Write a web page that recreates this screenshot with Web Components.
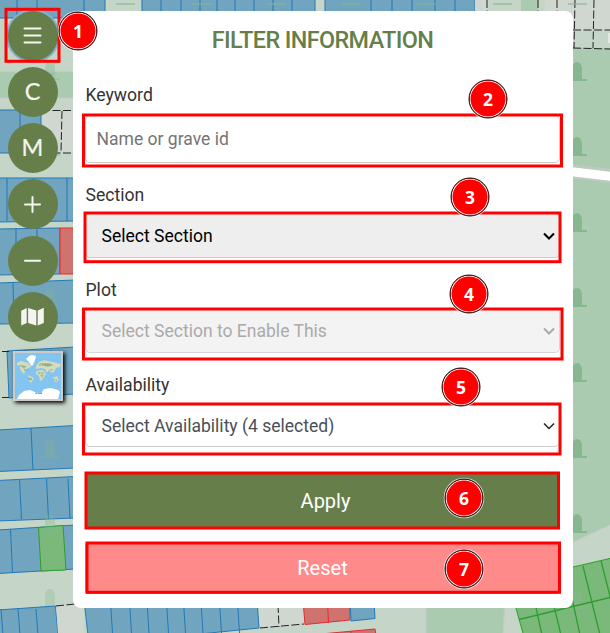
<!DOCTYPE html>
<html lang="en"><head><meta charset="utf-8"><title>Filter information</title>
<style>html,body{margin:0;width:610px;height:633px;overflow:hidden;font-family:Roboto,"Liberation Sans",sans-serif}</style></head>
<body><cemetery-app></cemetery-app>
<script>
const define=(name,html,after)=>customElements.define(name,class extends HTMLElement{
  constructor(){super();this.attachShadow({mode:'open'}).innerHTML=typeof html==='function'?'':html}
  connectedCallback(){if(typeof html==='function')this.shadowRoot.innerHTML=html(this);if(after)after(this)}
});
const poly=(pts,c)=>`<polygon class="${c}" points="${pts}"/>`;
const lines=(xs,y1,y2,dx=0,c='bl')=>xs.map(x=>`<path class="${c}" d="M${x} ${y1}L${x+dx} ${y2}"/>`).join('');
const tomb=(x,y)=>`<path class="tomb" d="M${x-5} ${y+17}V${y+6}Q${x-4} ${y} ${x} ${y}Q${x+4} ${y} ${x+5} ${y+6}V${y+17}H${x+10}V${y+19}H${x-10}V${y+17}Z"/>`;

define('cemetery-map',()=>`<style>:host{display:block}svg{display:block}
.b{fill:#71a4be;stroke:#2379b7}.bl{fill:none;stroke:#2379b7}.g{fill:#7bb97b;stroke:#2f9d2f}.gl{fill:none;stroke:#2f9d2f;stroke-width:1.3}
.r{fill:#d0736f;stroke:#e32c2f}.rl{stroke:#e32c2f}.p{fill:#aacbb0}.e{fill:#d0d6d0}.d{fill:none;stroke:#222;stroke-dasharray:8 2.5}.tomb{fill:#86b78f}</style>
<svg width="610" height="633" viewBox="0 0 610 633"><rect width="610" height="633" fill="#c5d5c8"/>
<path class="p" d="M0 72H73V98H0ZM521 0H538V11H521ZM560 48H610V525L560 548ZM426 600H505L503 633H426Z"/>
<path d="M0 71.5H73M0 98H73M573 542L610 525M426 600V633M505 600L503 633" fill="none" stroke="#c7c9c8"/>
${poly('-2,-2 105,-2 105,18 -2,18','b')}${lines([17,37,84],0,18)}
${poly('142,-2 315,-2 315,18 142,18','b')}${lines([161,181,200,217,235,254,273,292],0,18)}
${poly('325,-2 475,-2 475,18 325,18','b')}${lines([371,392,412,435,455],0,18)}
<path class="e" d="M475 0H487V15H475ZM545 0H610V30H545Z"/>
<path class="d" d="M487 0V15M538 0V12M557 0V12M575 0L574 48M594 0L593 48M573 30H610M573 48L610 49"/>
<rect x="608" y="33" width="4" height="10" fill="#e3e8e2"/>
<g opacity=".55"><path d="M116 4H135M192 4H211M267 4H286M342 4H361M417 4H436M493 4H512M568 4H587" stroke="#86b78f" stroke-width="2"/></g>
<g opacity=".4">${tomb(50,61)}${tomb(50,137)}</g>
${poly('-2,110 41,110 41,153 -2,153','b')}${lines([20],110,153)}
<path class="e" d="M42 110H73V153H42Z"/><path class="d" d="M42 110.500H73M42 153H73M62 111L61 153"/>
${poly('-2,178 75,178 75,221 -2,222','b')}${lines([7,33,67],178,221)}
${poly('-2,229 60,228 60,274 -2,275','b')}${lines([16,37],228,274)}${poly('60,228 75,228 75,274 60,274','r')}
${poly('-2,283 75,280 75,323 -2,324','b')}${lines([13],283,324,1)}
${poly('7,351 75,347 75,394 9,398','b')}${lines([25,51],350,396,2)}<path class="d" d="M2 351.500H9M2 397.500H9"/>
${poly('-2,430 75,425.500 75,468 -2,471.500','b')}${lines([31],428,470,2)}
${poly('-2,480.500 75,476.500 75,518 -2,521','b')}${lines([19.500,46.500,68],479,519,2)}
${poly('-2,530 75,525 75,569 -2,573.500','b')}${lines([10.500],529,573,2)}${poly('38.500,527.500 63,525.500 66,570 41,571','g')}
<g opacity=".3">${tomb(50,439)}${tomb(50,514)}${tomb(50,589)}${tomb(50,288)}</g>
${poly('-2,610 55.500,606 58,635 -2,635','b')}${lines([1,18,36],609,635,2)}
<path class="e" d="M56 606L84 604V633H58ZM259 600H304V625L259 628Z"/><path class="d" d="M56 606L75 604M260 628L304 624M278 605L279 627"/>
${poly('84,600 257,600 259,628 190,635 88,635','b')}${lines([110.500,129.500,147,166.500,183.500,201,219.500,237.500],602,633,2)}
${poly('303,600 350,600 350,620 305,624.500','r')}${lines([327.500],602,623,1,'rl')}${poly('350,600 374,600 375,618.500 351,621','b')}
${poly('310,635 375,629 376,635','r')}<path class="rl" d="M351 631V635"/>
<path d="M570 171L612 176" stroke="#bfc9c0" stroke-width="14"/><path d="M570 171.500L612 176.500" stroke="#fff" stroke-width="9"/>
${[62,137,213,288,363,439,514].map(y=>tomb(577,y)).join('')}
${poly('509.5,585 530,577 612,558 612,635 523.5,635','g')}<g opacity=".35">${tomb(577,590)}</g>
<path class="gl" d="M519 619.500L612 597M535 603L542 635M553 602L561 635M572 598L580 635M583 566L600 635M601 561L612 604"/>
</svg>`);

const icons={
menu:'<path d="M16.500 18H32.500M16.500 25H32.500M16.500 32H32.500" transform="translate(0 -.5)" stroke="#f4f5f0" stroke-width="2" stroke-linecap="round"/>',
plus:'<path d="M17.500 25H32.500M25 17.500V32.500" transform="translate(-.5 .5)" stroke="#f4f5f0" stroke-width="2" stroke-linecap="round"/>',
minus:'<path d="M17.500 25H32.500" transform="translate(-.5 -.3)" stroke="#f4f5f0" stroke-width="2" stroke-linecap="round"/>',
map:'<path d="M13.200 18.700L18.700 16V31L13.200 33.500ZM20.100 16L28.300 18.500V33.500L20.100 31ZM29.700 18.500L35.800 15.800V31L29.700 33.500Z" fill="#f4f5f0"/>'};
define('round-button',el=>{const i=el.getAttribute('icon');return `<style>:host{display:grid;place-items:center;width:50px;height:50px;border-radius:50%;background:#667f4a;color:#f4f5f0}
:host([active]){box-shadow:0 0 0 2px #86afd0}svg{display:block}span{font:400 23.500px/49px Lato,sans-serif;height:50px;margin-right:1px;-webkit-text-stroke:.2px}</style>${i?`<svg width="50" height="50">${icons[i]}</svg>`:'<span><slot></slot></span>'}`});

define('base-map-thumb',`<style>:host{display:block;width:46px;height:46px;border:2px solid #ccc;box-shadow:2px 2px 4px #000}svg{display:block}</style>
<svg width="46" height="46" viewBox="0 0 46 46"><rect width="46" height="46" fill="#83c4f1"/>
<path d="M11 6L14 3L17 2L21 3L20 7L18 12L16 13L14 9ZM2 46L4 42L9 38L15 37L22 40L26 41L29 36L36 35L43 37L45 39L43 46Z" fill="#fff"/>
<path d="M2 10L6 8L10 9L13 10L16 14L12 16L10 19L9 21L6 18L4 13L2 12ZM13 22L19 25L16 30L14 28ZM21 13L24 9L29 7L33 8L38 9L46 11L45 14L41 15L39 19L37 20L34 17L32 20L30 16L26 15L21 16ZM21 18L28 17L31 21L27 27L25 28L24 23L21 21ZM38 25L42 23L44 27L41 29L38 28Z" fill="#d3dcbb"/>
<path d="M6 13L12 13L9 16ZM24 10L34 10L39 12L32 14ZM25 22L29 21L27 25ZM14 24L17 26L15 28ZM34 16L38 16L37 18Z" fill="#9fc394"/>
<path d="M4 13H10M24 12H36M23 20H29M20 40.500H27M38 27H42M13 26H17M9 17H13" stroke="#667" stroke-width=".6" stroke-dasharray="2 .7"/></svg>`);

define('tool-rail',`<style>:host{display:flex;flex-direction:column;gap:6.250px;width:50px;padding-top:10.500px;margin-left:8px}base-map-thumb{margin:2.750px 0 0 5px}</style>
<round-button icon="menu" active></round-button><round-button>C</round-button><round-button>M</round-button><round-button icon="plus"></round-button><round-button icon="minus"></round-button><round-button icon="map"></round-button><base-map-thumb></base-map-thumb>`);

define('filter-field',el=>{const k=el.getAttribute('kind');return `<style>:host{display:block}label{display:block;font-size:17.600px;line-height:24px;color:#333;margin-left:.5px}
.box{box-sizing:border-box;display:flex;align-items:center;justify-content:space-between;height:var(--h,45px);margin-top:var(--gap,6px);border:1px solid #ccc;border-radius:5px;padding:0 3px 0 15.500px;font-size:17.550px;background:#fff;color:#495057}
.input{padding-left:10.500px;color:#757575}.select{background:#eee;color:#000}.disabled{background:#f3f3f3;color:#aaa;border-color:#d6d6d6;padding-top:1px}.custom{padding-top:1px}svg{display:block}</style>
<label>${el.getAttribute('label')}</label><div class="box ${k}"><span><slot></slot></span>${k==='input'?'':`<svg width="14" height="10" viewBox="0 0 14 10" fill="none" stroke="${k==='disabled'?'#aaa':k==='select'?'#000':'#222'}" stroke-width="${k==='custom'?1.5:2.100}"><path d="M2 2.500L7 7.500L12 2.500"/></svg>`}</div>`});

define('action-button',`<style>:host{display:grid;place-items:center;background:var(--bg);color:#fff;font-size:20px;line-height:24px;border-radius:4px}</style><slot></slot>`);

define('filter-panel',`<style>:host{box-sizing:border-box;display:flex;flex-direction:column;width:500px;height:597px;margin:11px 0 0 15px;padding:0 13px 0 12px;border-radius:8px;background:#fff}
h2{margin:0;height:58px;font:500 23.400px/58px Roboto,sans-serif;letter-spacing:-.62px;text-align:center;color:#667f4a}
.k{--h:48px;--gap:8px;margin-top:14px}.s{margin-top:20px}.p{margin-top:20px}.a{--h:44px;margin-top:20px}
.apply{--bg:#667f4a;height:55px;margin-top:25px;box-sizing:border-box;padding:2px 0 0 6px}.reset{--bg:#ff8a8a;height:52px;margin-top:15px}</style>
<h2>FILTER INFORMATION</h2>
<filter-field class="k" label="Keyword" kind="input">Name or grave id</filter-field>
<filter-field class="s" label="Section" kind="select">Select Section</filter-field>
<filter-field class="p" label="Plot" kind="disabled">Select Section to Enable This</filter-field>
<filter-field class="a" label="Availability" kind="custom">Select Availability (4 selected)</filter-field>
<action-button class="apply">Apply</action-button><action-button class="reset">Reset</action-button>`);

define('number-badge',`<style>:host{position:absolute;box-sizing:border-box;width:39px;height:39px;transform:translate(-50%,-50%);border-radius:50%;border:1.500px solid #111;background:#f00;box-shadow:inset 0 0 0 1px #fff,0 0 0 .8px #fffc;display:grid;place-items:center;padding-bottom:2px;color:#fff;font:700 17.500px/24px "Noto Sans",sans-serif}</style><slot></slot>`);

const frames=[[6,9.300,53,52],[83.500,115,478,51],[85,213,475,48.700],[83.500,309,478.500,50],[83.500,404,476.500,50],[86,473,472.500,55],[87,543,472.500,49.300]];
const marks=[[78,31],[488,99],[470,197],[469,294],[461,387],[464,498],[464,569]];
define('step-annotations',`<style>:host{position:absolute;inset:0}svg{display:block}</style><svg width="610" height="633" fill="none" stroke="#f00" stroke-width="3">${frames.map(([x,y,w,h])=>`<rect x="${x}" y="${y}" width="${w}" height="${h}"/>`).join('')}</svg>
${marks.map(([x,y],i)=>`<number-badge style="left:${x}px;top:${y}px">${i+1}</number-badge>`).join('')}`);

define('cemetery-app',`<style>:host{display:grid;position:relative;width:610px;height:633px;overflow:hidden}cemetery-map,main{grid-area:1/1}main{display:flex;align-items:flex-start;position:relative}</style>
<cemetery-map></cemetery-map><main><tool-rail></tool-rail><filter-panel></filter-panel></main><step-annotations></step-annotations>`);
</script></body></html>
